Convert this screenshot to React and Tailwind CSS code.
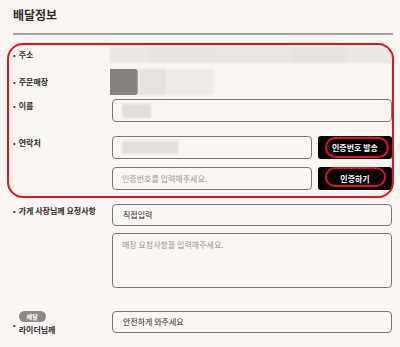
import React from "react";

function Label({ children, className = "" }) {
  return (
    <div className={"flex w-[99px] shrink-0 items-center text-[8px] font-semibold leading-[12px] text-[#2f2c2a] " + className}>
      <span className="mr-[3px] text-[7px]">•</span>
      {children}
    </div>
  );
}

function Field({ children, className = "" }) {
  return (
    <div className={"flex items-center rounded-[4px] border-[1.5px] border-[#7d7874] bg-[#faf6f1] px-[9px] text-[8px] " + className}>
      {children}
    </div>
  );
}

function VerifyButton({ children, ring }) {
  return (
    <button className="relative ml-[6px] flex h-[23px] w-[74px] shrink-0 items-center justify-center rounded-[3px] bg-black text-[8px] font-bold text-white">
      <span className={"absolute rounded-full border-2 border-[#e3131b] " + ring} />
      {children}
    </button>
  );
}

export default function App() {
  return (
    <div className="relative h-[347px] w-[400px] overflow-hidden bg-[#faf6f1] font-['Noto_Sans_CJK_KR','Noto_Sans',sans-serif] text-[#2f2c2a]">
      {/* Header */}
      <h2 className="h-[33px] pl-[13px] pt-[8px] text-[12px] font-bold leading-[14px]">배달정보</h2>
      <div className="mx-[13px] mr-[7px] h-[2px] bg-[#a7a39f]" />

      <div className="pl-[13px] pr-[8px] pt-[12px]">
        {/* 주소 */}
        <div className="flex h-[16px]">
          <Label>주소</Label>
          <div className="-ml-[2px] flex flex-1 blur-[1px]">
            <div className="w-[40px] bg-[#ebe7e2]" />
            <div className="w-[60px] bg-[#e8e4df]" />
            <div className="w-[80px] bg-[#eae6e1]" />
            <div className="w-[55px] bg-[#e7e3de]" />
            <div className="flex-1 bg-[#ece8e3]" />
          </div>
        </div>

        {/* 주문매장 */}
        <div className="mt-[6px] flex h-[26px]">
          <Label>주문매장</Label>
          <div className="-ml-[2px] flex">
            <div className="w-[28px] rounded-r-[3px] bg-[#85827e]" />
            <div className="w-[29px] bg-[#e6e2dd] blur-[1px]" />
            <div className="w-[47px] bg-[#efebe6] blur-[1px]" />
          </div>
        </div>

        {/* 이름 */}
        <div className="mt-[4px] flex h-[23px]">
          <Label className="items-start pt-[1px]">이름</Label>
          <Field className="flex-1">
            <div className="h-[14px] w-[29px] bg-[#e3dfda] blur-[1px]" />
          </Field>
        </div>

        {/* 연락처 */}
        <div className="mt-[14px] flex h-[23px]">
          <Label className="items-start pt-[1px]">연락처</Label>
          <Field className="flex-1 px-[4px]">
            <div className="h-[13px] w-[56px] bg-[#e2ded9] blur-[1px]" />
          </Field>
          <VerifyButton ring="left-[7px] right-[3px] top-[1px] bottom-[1px]">인증번호 발송</VerifyButton>
        </div>
        <div className="mt-[8px] flex h-[23px]">
          <div className="w-[99px] shrink-0" />
          <Field className="flex-1 text-[#9b9692]">인증번호를 입력해주세요.</Field>
          <VerifyButton ring="left-[7px] right-[6px] top-[0px] bottom-[3px]">인증하기</VerifyButton>
        </div>

        {/* 가게 사장님께 요청사항 */}
        <div className="mt-[14px] flex h-[22px]">
          <Label className="items-start pt-[1px]">가게 사장님께 요청사항</Label>
          <Field className="flex-1 px-[10px]">직접입력</Field>
        </div>
        <div className="mt-[7px] flex h-[55px]">
          <div className="w-[99px] shrink-0" />
          <Field className="flex-1 items-start px-[8px] pt-[5px] text-[#9b9692]">매장 요청사항을 입력해주세요.</Field>
        </div>

        {/* 라이더님께 */}
        <div className="mt-[23px] flex h-[22px]">
          <div className="flex w-[99px] shrink-0 items-start text-[8px] font-semibold leading-[12px]">
            <span className="mr-[3px] mt-[8px] text-[7px]">•</span>
            <div className="flex flex-col">
              <span className="flex h-[11px] w-[27px] items-center justify-center rounded-full bg-[#8c8986] text-[6px] font-bold text-white">배달</span>
              <span className="mt-[2px]">라이더님께</span>
            </div>
          </div>
          <Field className="flex-1 px-[10px]">안전하게 와주세요</Field>
        </div>
      </div>

      {/* red highlight overlay */}
      <div className="pointer-events-none absolute left-[7px] top-[43px] h-[155px] w-[387px] rounded-[16px] border-2 border-[#e3131b]" />
    </div>
  );
}
